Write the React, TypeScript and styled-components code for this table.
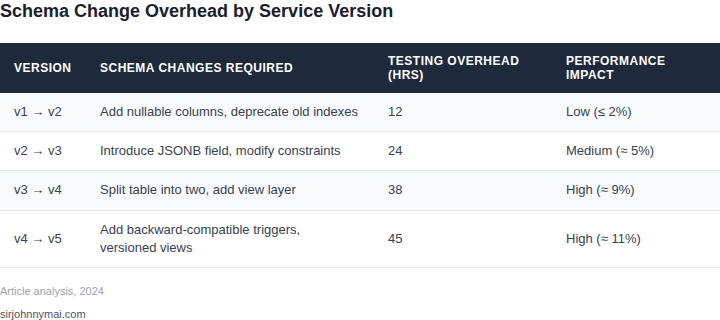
import styled, { createGlobalStyle } from 'styled-components';

type Row = {
  version: string;
  changes: string;
  hours: number;
  impact: string;
};

const ROWS: Row[] = [
  { version: 'v1 → v2', changes: 'Add nullable columns, deprecate old indexes', hours: 12, impact: 'Low (≤ 2%)' },
  { version: 'v2 → v3', changes: 'Introduce JSONB field, modify constraints', hours: 24, impact: 'Medium (≈ 5%)' },
  { version: 'v3 → v4', changes: 'Split table into two, add view layer', hours: 38, impact: 'High (≈ 9%)' },
  { version: 'v4 → v5', changes: 'Add backward-compatible triggers, versioned views', hours: 45, impact: 'High (≈ 11%)' },
];

const COLUMNS = [
  { label: 'Version', width: 86 },
  { label: 'Schema Changes Required', width: 288 },
  { label: 'Testing Overhead (hrs)', width: 178 },
  { label: 'Performance Impact', width: 168 },
];

const GlobalStyle = createGlobalStyle`
  html, body {
    margin: 0;
    padding: 0;
    background: #ffffff;
  }

  body {
    font-family: "Liberation Sans", Arial, sans-serif;
  }
`;

const App = () => {
  return (
    <>
      <GlobalStyle />
      <Figure>
        <Title>Schema Change Overhead by Service Version</Title>
        <Table>
          <colgroup>
            {COLUMNS.map((col) => (
              <col key={col.label} style={{ width: col.width }} />
            ))}
          </colgroup>
          <thead>
            <tr>
              {COLUMNS.map((col) => (
                <HeadCell key={col.label}>{col.label}</HeadCell>
              ))}
            </tr>
          </thead>
          <tbody>
            {ROWS.map((row, i) => (
              <BodyRow key={row.version} $shaded={i % 2 === 0}>
                <Cell>{row.version}</Cell>
                <Cell>{row.changes}</Cell>
                <Cell>{row.hours}</Cell>
                <Cell>{row.impact}</Cell>
              </BodyRow>
            ))}
          </tbody>
        </Table>
        <Source>Article analysis, 2024</Source>
        <Site>sirjohnnymai.com</Site>
      </Figure>
    </>
  );
};

export default App;

const Figure = styled.div`
  width: 720px;
  display: flex;
  flex-direction: column;
`;

const Title = styled.h2`
  margin: 0;
  padding-top: 1px;
  font-size: 18px;
  line-height: 21px;
  font-weight: 700;
  color: #1a202c;
  margin-bottom: 21px;
`;

const Table = styled.table`
  width: 720px;
  border-collapse: collapse;
  table-layout: fixed;
`;

const HeadCell = styled.th`
  background: #1e293b;
  color: #ffffff;
  text-align: left;
  text-transform: uppercase;
  font-size: 12px;
  font-weight: 700;
  letter-spacing: 0.5px;
  line-height: 14px;
  padding: 11px 14px;
  vertical-align: middle;
`;

const BodyRow = styled.tr<{ $shaded: boolean }>`
  background: ${(p) => (p.$shaded ? '#f8fafc' : '#ffffff')};
  border-bottom: 1px solid #e5e7eb;
`;

const Cell = styled.td`
  padding: 10px 14px;
  font-size: 13px;
  line-height: 1.4;
  color: #374151;
  vertical-align: middle;
`;

const Source = styled.div`
  margin-top: 16px;
  font-size: 11px;
  line-height: 14px;
  color: #9ca3af;
`;

const Site = styled.div`
  margin-top: 9px;
  font-size: 11px;
  line-height: 14px;
  color: #4b5563;
`;
